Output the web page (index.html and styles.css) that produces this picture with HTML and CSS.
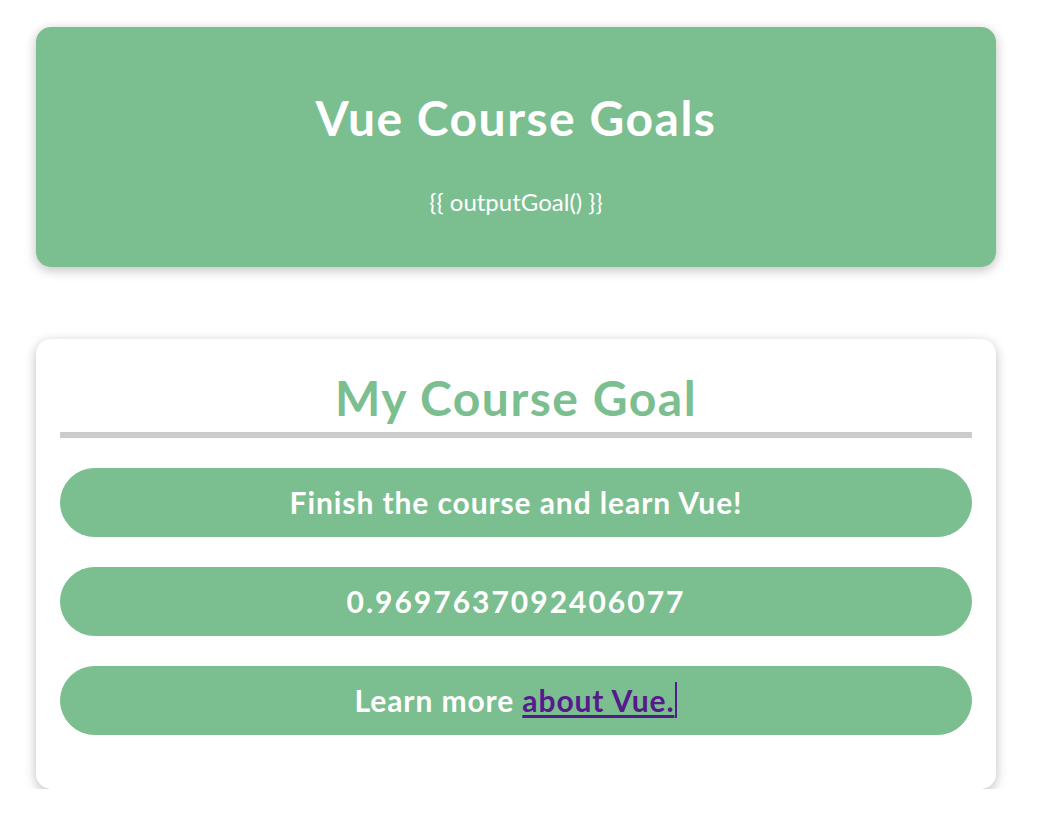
FILE: index.html
```html
<!DOCTYPE html>
<html lang="en">
<head>
<meta charset="utf-8">
<title>Vue Basics</title>
<link rel="stylesheet" href="styles.css">
</head>
<body>
<div class="page">
  <header class="hero">
    <h1 class="hero-title">Vue Course Goals</h1>
    <p class="hero-text">{{ outputGoal() }}</p>
  </header>
  <section class="goal-card">
    <h2 class="goal-title">My Course Goal</h2>
    <p class="goal-pill">Finish the course and learn Vue!</p>
    <p class="goal-pill goal-number">0.9697637092406077</p>
    <p class="goal-pill">Learn more <a class="goal-link" href="#">about Vue.</a></p>
  </section>
</div>
</body>
</html>
```

FILE: styles.css
```css
* { box-sizing: border-box; }
html { font-family: "Lato", "Noto Sans", sans-serif; }
body { margin: 0; background: #ffffff; }

.page {
  width: 1032px;
  padding-top: 27px;
  display: flex;
  flex-direction: column;
  align-items: center;
}

.hero {
  width: 960px;
  box-shadow: 0 3px 12px rgba(0, 0, 0, 0.26);
  border-radius: 15px;
  padding: 24px;
  background-color: #7bbe8f;
  color: #ffffff;
  text-align: center;
  margin-bottom: 72px;
}

.hero-title {
  margin: 32px 0;
  font-size: 48px;
  line-height: 69px;
  font-weight: 700;
  letter-spacing: 1.5px;
}

.hero-text {
  margin: 0 0 24px 0;
  font-size: 24px;
  line-height: 35px;
}

.goal-card {
  width: 960px;
  box-shadow: 0 3px 12px rgba(0, 0, 0, 0.26);
  border-radius: 15px;
  padding: 24px;
  text-align: center;
  background: #ffffff;
}

.goal-title {
  margin: 0;
  font-size: 48px;
  line-height: 69px;
  font-weight: 700;
  color: #7bbe8f;
  border-bottom: 6px solid #cccccc;
  letter-spacing: 1.5px;
}

.goal-pill {
  margin: 30px 0;
  font-size: 30px;
  line-height: 43px;
  font-weight: 700;
  border: 1px solid #7bbe8f;
  background-color: #7bbe8f;
  color: #ffffff;
  padding: 12px;
  border-radius: 37px;
  letter-spacing: 0.9px;
}

.goal-number {
  letter-spacing: 2px;
}

.goal-link {
  color: #551a8b;
  text-decoration: underline;
  text-decoration-thickness: 3px;
  text-underline-offset: 3px;
  padding-right: 1px;
  border-right: 2px solid #551a8b;
}
```
